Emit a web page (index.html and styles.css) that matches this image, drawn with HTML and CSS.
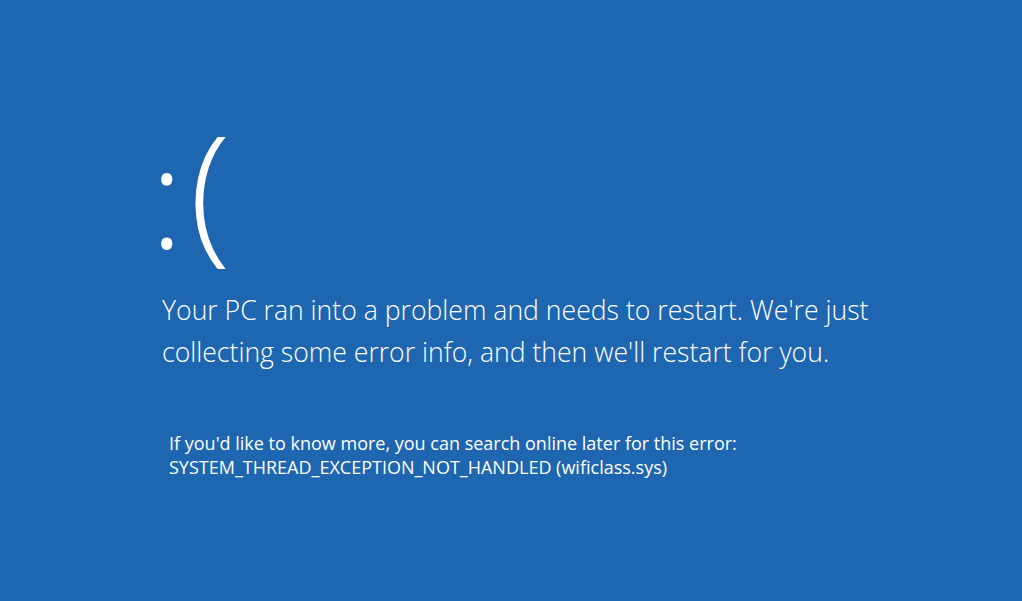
FILE: index.html
```html
<!DOCTYPE html>
<html lang="en">
<head>
    <meta charset="UTF-8">
    <title>Your PC ran into a problem</title>
    <link rel="stylesheet" href="styles.css">
</head>
<body>
    <div class="screen">
        <div class="face"><span class="eyes">:</span><span class="mouth">(</span></div>
        <p class="message">Your PC ran into a problem and needs to restart. We're just<br>collecting some error info, and then we'll restart for you.</p>
        <p class="details">If you'd like to know more, you can search online later for this error:<br>SYSTEM_THREAD_EXCEPTION_NOT_HANDLED (wificlass.sys)</p>
    </div>
</body>
</html>
```

FILE: styles.css
```css
body {
    margin: 0;
    background-color: #1f66b1;
    color: #fff;
    font-family: "Open Sans", "Noto Sans", sans-serif;
}
.screen {
    height: 601px;
    padding: 96px 0 0 150px;
    box-sizing: border-box;
}
.face {
    display: flex;
    align-items: center;
    height: 193px;
    font-weight: 300;
    line-height: 1;
}
.eyes {
    font-size: 140px;
    margin-right: 6px;
    position: relative;
    top: 2px;
}
.mouth {
    font-size: 152px;
    margin-top: -12px;
}
.message {
    margin: 0;
    padding-left: 12px;
    font-size: 26.6px;
    font-weight: 300;
    line-height: 42px;
}
.details {
    margin: 58px 0 0;
    padding-left: 19px;
    font-size: 18px;
    line-height: 24px;
}
```
